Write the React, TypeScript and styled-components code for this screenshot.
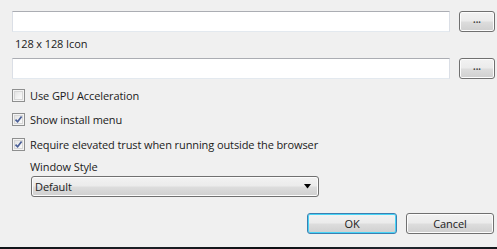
import React from "react";
import styled, { createGlobalStyle } from "styled-components";

const Global = createGlobalStyle`
  html, body { margin: 0; padding: 0; background: #f0f0f0; }
  body { font-family: "Open Sans", "Noto Sans", sans-serif; }
`;

const Page = styled.div`
  width: 497px;
  height: 249px;
  background: #f0f0f0;
  display: flex;
  flex-direction: column;
  box-sizing: border-box;
  overflow: hidden;
  font-family: "Open Sans", "Noto Sans", sans-serif;
  font-size: 11px;
  letter-spacing: -0.1px;
  color: #1b1b1b;
`;

const Body = styled.div`
  flex: 1;
  display: flex;
  flex-direction: column;
  padding: 11px 2px 0 12px;
`;

const FileRow = styled.div<{ $mt?: number }>`
  display: flex;
  align-items: center;
  gap: 9px;
  height: 21px;
  margin-top: ${(p) => p.$mt ?? 0}px;
`;

const TextBox = styled.div`
  flex: 1;
  height: 21px;
  box-sizing: border-box;
  background: #fff;
  border: 1px solid #e2e3ea;
  border-top-color: #abadb3;
  border-left-color: #dbdfe6;
  border-right-color: #dbdfe6;
  border-bottom-color: #e3e9ef;
`;

const PushButton = styled.button<{ $w: number; $default?: boolean }>`
  width: ${(p) => p.$w}px;
  height: 21px;
  box-sizing: border-box;
  padding: 0;
  margin: 0;
  border: 1px solid ${(p) => (p.$default ? "#3c7fb1" : "#707070")};
  border-radius: 3px;
  background: linear-gradient(
    to bottom,
    #f2f2f2 0%,
    #ebebeb 48%,
    #dddddd 52%,
    #cfcfcf 100%
  );
  box-shadow: ${(p) =>
    p.$default ? "inset 0 0 0 1px #48d4f6" : "inset 0 0 0 1px #fcfcfc"};
  font-family: "Open Sans", "Noto Sans", sans-serif;
  font-size: 11px;
  letter-spacing: -0.1px;
  color: #1b1b1b;
  display: flex;
  align-items: center;
  justify-content: center;
  line-height: 1;
`;

const Dots = styled.span`
  font-size: 7px;
  letter-spacing: 0px;
  color: #444;
  margin-top: 1px;
`;

const Label = styled.div<{ $ml: number; $mt: number }>`
  margin-left: ${(p) => p.$ml}px;
  margin-top: ${(p) => p.$mt}px;
  height: 14px;
  line-height: 14px;
  white-space: nowrap;
`;

const CheckRow = styled.div<{ $mt: number }>`
  display: flex;
  align-items: center;
  gap: 5px;
  height: 14px;
  margin-top: ${(p) => p.$mt}px;
  white-space: nowrap;
`;

const Box = styled.span`
  width: 13px;
  height: 13px;
  box-sizing: border-box;
  border: 1px solid #8e8f8f;
  background: linear-gradient(135deg, #dcdcdc 0%, #f4f4f4 60%, #ffffff 100%);
  box-shadow: inset 0 0 0 1px #f4f4f4, inset 0 0 0 2px #d6d6d6;
  display: flex;
  align-items: center;
  justify-content: center;
  flex: none;
`;

const Select = styled.div`
  margin-left: 19px;
  margin-top: 2px;
  width: 288px;
  height: 21px;
  box-sizing: border-box;
  border: 1px solid #707070;
  border-radius: 3px;
  background: linear-gradient(
    to bottom,
    #f2f2f2 0%,
    #ebebeb 48%,
    #dddddd 52%,
    #cfcfcf 100%
  );
  box-shadow: inset 0 0 0 1px #fcfcfc;
  display: flex;
  align-items: center;
  justify-content: space-between;
  padding: 0 6px 0 3px;
`;

const Footer = styled.div`
  display: flex;
  justify-content: flex-end;
  gap: 9px;
  margin-top: 16px;
  padding-right: 1px;
`;

const Taskbar = styled.div`
  height: 2px;
  background: linear-gradient(
    to right,
    #101418 0%,
    #1c2026 30%,
    #0d1013 55%,
    #222830 80%,
    #14181c 100%
  );
`;

function Check({ checked }: { checked?: boolean }) {
  return (
    <Box>
      {checked && (
        <svg width="9" height="9" viewBox="0 0 9 9">
          <path
            d="M1.5 4.6 L3.6 6.8 L7.6 1.4"
            fill="none"
            stroke="#4a5f97"
            strokeWidth="1.7"
          />
        </svg>
      )}
    </Box>
  );
}

export default function App() {
  return (
    <Page>
      <Global />
      <Body>
        <FileRow>
          <TextBox />
          <PushButton $w={36}>
            <Dots>•••</Dots>
          </PushButton>
        </FileRow>
        <Label $ml={3} $mt={5}>
          128 x 128 Icon
        </Label>
        <FileRow $mt={7}>
          <TextBox />
          <PushButton $w={36}>
            <Dots>•••</Dots>
          </PushButton>
        </FileRow>
        <CheckRow $mt={9}>
          <Check />
          <span>Use GPU Acceleration</span>
        </CheckRow>
        <CheckRow $mt={10}>
          <Check checked />
          <span>Show install menu</span>
        </CheckRow>
        <CheckRow $mt={11}>
          <Check checked />
          <span>Require elevated trust when running outside the browser</span>
        </CheckRow>
        <Label $ml={18} $mt={9}>
          Window Style
        </Label>
        <Select>
          <span>Default</span>
          <svg width="8" height="5" viewBox="0 0 8 5">
            <path d="M0 0 H7 L3.5 4.5 Z" fill="#000" />
          </svg>
        </Select>
        <Footer>
          <PushButton $w={90} $default>
            OK
          </PushButton>
          <PushButton $w={88}>Cancel</PushButton>
        </Footer>
      </Body>
      <Taskbar />
    </Page>
  );
}
